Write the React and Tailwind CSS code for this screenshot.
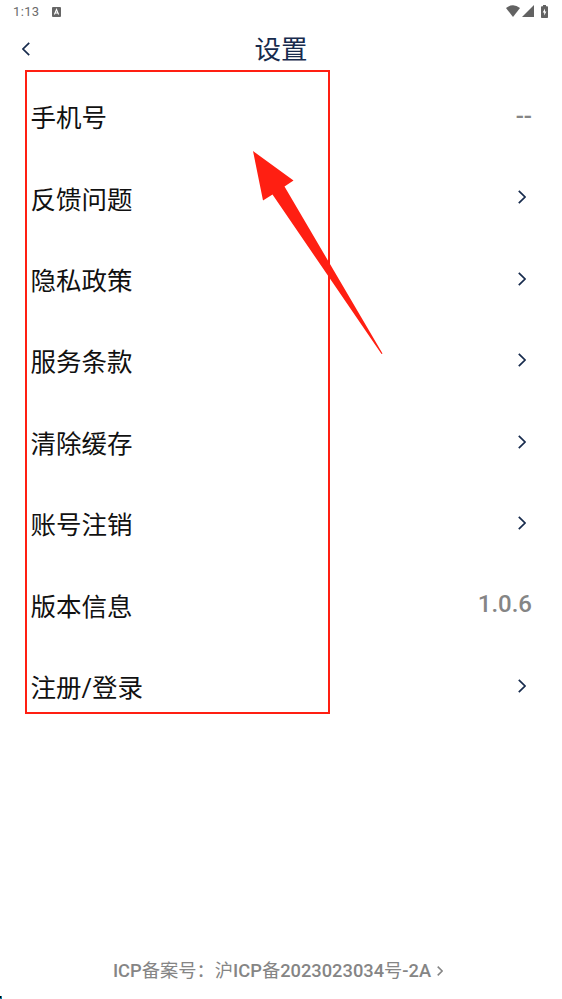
import React from 'react';

const menuItems = [
  { label: '手机号', value: '--' },
  { label: '反馈问题' },
  { label: '隐私政策' },
  { label: '服务条款' },
  { label: '清除缓存' },
  { label: '账号注销' },
  { label: '版本信息', value: '1.0.6' },
  { label: '注册/登录' },
];

const Chevron = ({ className, strokeWidth = 1.7 }) => (
  <svg viewBox="0 0 8 14" fill="none" stroke="currentColor" strokeWidth={strokeWidth} className={className}>
    <path d="M0.8 0.8 L7 7 L0.8 13.2" />
  </svg>
);

const StatusBar = () => (
  <div className="flex h-6 items-center justify-between pl-[13px] pr-[14px] text-[#6b6b6b]">
    <div className="flex items-center gap-[13px]">
      <span className="text-[13px] leading-6 tracking-[0.35px]">1:13</span>
      <svg viewBox="0 0 9 10" className="h-[10px] w-[9px]">
        <rect width="9" height="10" rx="1" fill="#666" />
        <path d="M2.4 7.5 L4.5 2.5 L6.6 7.5 M3.2 6 H5.8" fill="none" stroke="#fff" strokeWidth="1.1" />
      </svg>
    </div>
    <div className="flex items-center pb-[2px] text-[#626262]">
      <svg viewBox="0 0 14 12" className="h-3 w-[14px]" fill="currentColor">
        <path d="M0 3 Q7 -2.6 14 3 L7 12 Z" />
      </svg>
      <svg viewBox="0 0 12 12" className="ml-[2px] h-3 w-3" fill="currentColor">
        <path d="M12 0 V12 H0 Z" />
      </svg>
      <svg viewBox="0 0 7 13" className="ml-[7px] h-[13px] w-[7px]">
        <path d="M0 2 Q0 1.2 0.8 1.2 H2 V0 H5 V1.2 H6.2 Q7 1.2 7 2 V12.2 Q7 13 6.2 13 H0.8 Q0 13 0 12.2 Z" fill="#626262" />
        <path d="M4 3.4 L1.7 7.5 H3.2 V10.6 L5.4 6.5 H4 Z" fill="#fff" />
      </svg>
    </div>
  </div>
);

const Header = () => (
  <header className="grid h-[52px] grid-cols-[1fr_auto_1fr] items-center text-[#172b4d]">
    <Chevron className="mb-[3px] ml-[22px] h-[14px] w-2 rotate-180" />
    <h1 className="text-[26.5px] leading-[52px]">设置</h1>
  </header>
);

const MenuRow = ({ label, value }) => (
  <li className="flex h-[81.43px] items-center justify-between pl-[30.5px]">
    <span className="pt-[3px] text-[25.5px] leading-9 text-[#111]">{label}</span>
    {value ? (
      <span className="mr-[30px] pb-[2px] text-[24px] font-medium leading-9 text-[#858585]">{value}</span>
    ) : (
      <Chevron className="mb-[1.5px] mr-[36.5px] h-[14px] w-2 text-[#172b4d]" />
    )}
  </li>
);

const App = () => (
  <div className="relative flex h-[999px] w-[562px] flex-col overflow-hidden bg-white font-['Roboto','Noto_Sans_CJK_SC',sans-serif]">
    <StatusBar />
    <Header />
    <ul>
      {menuItems.map((item) => (
        <MenuRow key={item.label} {...item} />
      ))}
    </ul>
    <footer className="mt-auto mb-[14px] flex items-center justify-center gap-[6px] pr-[6px] text-[#858585]">
      <span className="whitespace-nowrap text-[18.3px] leading-7">
        <span className="font-medium">ICP</span>备案号：沪<span className="font-medium">ICP</span>备
        <span className="font-medium">2023023034</span>号<span className="font-medium">-2A</span>
      </span>
      <Chevron className="h-[10px] w-[6px]" strokeWidth={2.2} />
    </footer>

    {/* highlight box and arrow over the menu */}
    <div className="absolute left-[25px] top-[70px] h-[644px] w-[305px] border-2 border-[#ff1f12]" />
    <svg viewBox="0 0 130 203" className="absolute left-[253px] top-[151px] h-[203px] w-[130px]" fill="#ff1f12">
      <path d="M0 0 L40.5 29.5 L31.5 35.5 L129.5 202.5 L128.5 203 L19.5 43.5 L10 49.5 Z" />
    </svg>
    <div className="absolute bottom-0 left-0 h-[3px] w-[2px] bg-[#087ca8]">
      <div className="h-[2px] w-px bg-black" />
    </div>
  </div>
);

export default App;
